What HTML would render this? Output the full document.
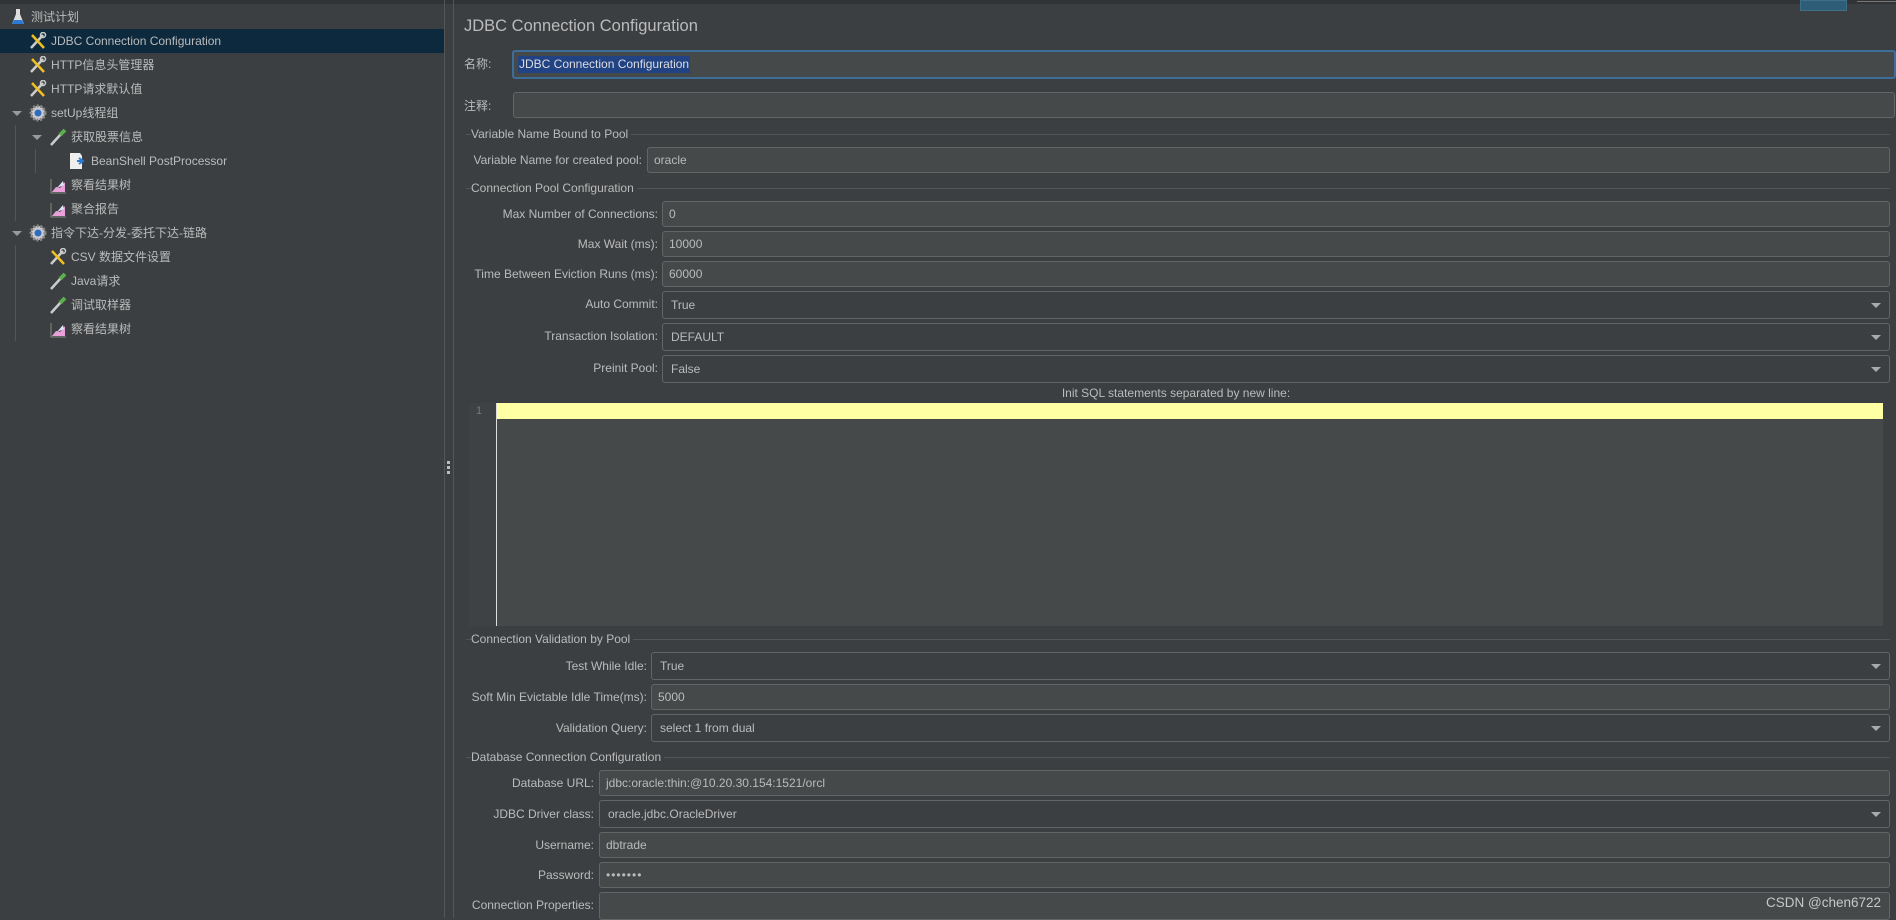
<!DOCTYPE html>
<html><head><meta charset="utf-8">
<style>
*{box-sizing:border-box;margin:0;padding:0}
body{width:1896px;height:918px;background:#3c3f41;font-family:"Liberation Sans","Noto Sans CJK SC",sans-serif;color:#bbbbbb;font-size:12px;position:relative;overflow:hidden}
.a{position:absolute;white-space:nowrap}
.row{position:absolute;left:0;width:444px;height:24px;line-height:24px;white-space:nowrap;font-size:12px}
.row svg{position:absolute;top:3px}
.row span{position:absolute}
.fld{position:absolute;background:#45494a;border:1px solid #646464;border-radius:3px;height:26px;line-height:24px;padding-left:6px;color:#bbbbbb;font-size:12px;white-space:nowrap}
.cmb{position:absolute;background:#3c3f41;border:1px solid #646464;border-radius:3px;height:28px;line-height:26px;padding-left:8px;font-size:12px;white-space:nowrap}
.cmb:after{content:"";position:absolute;right:8px;top:11px;border-left:5px solid transparent;border-right:5px solid transparent;border-top:5px solid #aaa}
.lbl{position:absolute;text-align:right;font-size:12px;line-height:26px;white-space:nowrap}
.sec{position:absolute;left:466px;right:6px;height:1px;background:#555}
.sec span{position:absolute;left:5px;top:-8px;background:#3c3f41;padding:0 3px 0 0;line-height:16px;font-size:12px;white-space:nowrap}
</style></head><body>
<div class="a" style="left:0;top:0;width:1896px;height:4px;background:#313335"></div>
<div class="a" style="left:444px;top:0;width:1px;height:918px;background:#555"></div>
<div class="a" style="left:453px;top:0;width:1px;height:918px;background:#555"></div>
<div class="a" style="left:447px;top:461px;width:3px;height:3px;background:#bbb"></div>
<div class="a" style="left:447px;top:466px;width:3px;height:3px;background:#bbb"></div>
<div class="a" style="left:447px;top:471px;width:3px;height:3px;background:#bbb"></div>
<div class="a" style="left:1800px;top:0;width:47px;height:11px;background:#2e5d78;border:1px solid #3f6e88"></div>
<div class="a" style="left:1857px;top:0;width:39px;height:2px;border-bottom:1px solid #777"></div>

<svg width="0" height="0" style="position:absolute">
<defs>
<g id="wr"><path d="M2 16 L14 3" stroke="#ccc" stroke-width="2.5"/><path d="M3 3 L15 16" stroke="#f0c020" stroke-width="2.5"/><circle cx="14" cy="3" r="2.5" fill="none" stroke="#ccc" stroke-width="1.5"/></g>
<g id="gr"><circle cx="9" cy="9" r="7" fill="#ccc" stroke="#888" stroke-dasharray="2 1.5" stroke-width="3"/><circle cx="9" cy="9" r="3.5" fill="#2d6cc0"/></g>
<g id="pp"><path d="M2 17 L12 6" stroke="#ccc" stroke-width="2.5"/><path d="M11 7 L16 2" stroke="#5cae4a" stroke-width="4"/></g>
<g id="ch"><path d="M2 3 V17 H17" stroke="#888" fill="none"/><path d="M3 16 L7 11 L11 12 L16 6 V16Z" fill="#e9a0d8"/><path d="M8 12 L14 5 L15 9Z" fill="#d8e6f6"/></g>
</defs></svg>

<div class="row" style="top:5px"><svg class="a" style="left:10px" width="16" height="18"><path d="M6 1h4v5l4 10H2l4-10z" fill="#ddd"/><path d="M4 12h8l2 4H2z" fill="#2b7bd6"/></svg><span style="left:31px">测试计划</span></div>
<div class="row" style="top:29px;background:#0d293e"><svg class="a" style="left:29px" width="18" height="18"><use href="#wr"/></svg><span style="left:51px">JDBC Connection Configuration</span></div>
<div class="row" style="top:53px"><svg class="a" style="left:29px" width="18" height="18"><use href="#wr"/></svg><span style="left:51px">HTTP信息头管理器</span></div>
<div class="row" style="top:77px"><svg class="a" style="left:29px" width="18" height="18"><use href="#wr"/></svg><span style="left:51px">HTTP请求默认值</span></div>
<div class="row" style="top:101px"><div class="a" style="left:12px;top:10px;border-left:5px solid transparent;border-right:5px solid transparent;border-top:5px solid #999"></div><svg class="a" style="left:29px" width="18" height="18"><use href="#gr"/></svg><span style="left:51px">setUp线程组</span></div>
<div class="row" style="top:125px"><div class="a" style="left:32px;top:10px;border-left:5px solid transparent;border-right:5px solid transparent;border-top:5px solid #999"></div><svg class="a" style="left:49px" width="18" height="18"><use href="#pp"/></svg><span style="left:71px">获取股票信息</span></div>
<div class="row" style="top:149px"><svg class="a" style="left:68px" width="20" height="18"><path d="M2 1h10l2 3v13H2z" fill="#eee"/><path d="M9 9h5M11 6l4 3-4 3" stroke="#2b7bd6" stroke-width="2" fill="none"/></svg><span style="left:91px">BeanShell PostProcessor</span></div>
<div class="row" style="top:173px"><svg class="a" style="left:49px" width="18" height="18"><use href="#ch"/></svg><span style="left:71px">察看结果树</span></div>
<div class="row" style="top:197px"><svg class="a" style="left:49px" width="18" height="18"><use href="#ch"/></svg><span style="left:71px">聚合报告</span></div>
<div class="row" style="top:221px"><div class="a" style="left:12px;top:10px;border-left:5px solid transparent;border-right:5px solid transparent;border-top:5px solid #999"></div><svg class="a" style="left:29px" width="18" height="18"><use href="#gr"/></svg><span style="left:51px">指令下达-分发-委托下达-链路</span></div>
<div class="row" style="top:245px"><svg class="a" style="left:49px" width="18" height="18"><use href="#wr"/></svg><span style="left:71px">CSV 数据文件设置</span></div>
<div class="row" style="top:269px"><svg class="a" style="left:49px" width="18" height="18"><use href="#pp"/></svg><span style="left:71px">Java请求</span></div>
<div class="row" style="top:293px"><svg class="a" style="left:49px" width="18" height="18"><use href="#pp"/></svg><span style="left:71px">调试取样器</span></div>
<div class="row" style="top:317px"><svg class="a" style="left:49px" width="18" height="18"><use href="#ch"/></svg><span style="left:71px">察看结果树</span></div>
<div class="a" style="left:15px;top:125px;width:1px;height:96px;background:#555"></div>
<div class="a" style="left:35px;top:149px;width:1px;height:24px;background:#555"></div>
<div class="a" style="left:15px;top:245px;width:1px;height:96px;background:#555"></div>

<div class="a" style="left:464px;top:15px;font-size:16.5px;line-height:22px">JDBC Connection Configuration</div>
<div class="a" style="left:464px;top:55px;line-height:18px">名称:</div>
<div class="a" style="left:512px;top:50px;width:1384px;height:29px;border:2px solid #3d6d99;border-radius:3px;background:#45494a"><span class="a" style="left:4px;top:4px;background:#214283;color:#ddd;line-height:17px;padding:0 1px;font-size:12px">JDBC Connection Configuration</span></div>
<div class="a" style="left:464px;top:97px;line-height:18px">注释:</div>
<div class="fld" style="left:513px;top:92px;width:1382px;height:26px"></div>

<div class="sec" style="top:134px"><span>Variable Name Bound to Pool</span></div>
<div class="lbl" style="left:440px;width:202px;top:147px">Variable Name for created pool:</div>
<div class="fld" style="left:647px;top:147px;width:1243px">oracle</div>

<div class="sec" style="top:188px"><span>Connection Pool Configuration</span></div>
<div class="lbl" style="left:440px;width:218px;top:201px">Max Number of Connections:</div>
<div class="fld" style="left:662px;top:201px;width:1228px">0</div>
<div class="lbl" style="left:440px;width:218px;top:231px">Max Wait (ms):</div>
<div class="fld" style="left:662px;top:231px;width:1228px">10000</div>
<div class="lbl" style="left:440px;width:218px;top:261px">Time Between Eviction Runs (ms):</div>
<div class="fld" style="left:662px;top:261px;width:1228px">60000</div>
<div class="lbl" style="left:440px;width:218px;top:291px">Auto Commit:</div>
<div class="cmb" style="left:662px;top:291px;width:1228px">True</div>
<div class="lbl" style="left:440px;width:218px;top:323px">Transaction Isolation:</div>
<div class="cmb" style="left:662px;top:323px;width:1228px">DEFAULT</div>
<div class="lbl" style="left:440px;width:218px;top:355px">Preinit Pool:</div>
<div class="cmb" style="left:662px;top:355px;width:1228px">False</div>

<div class="a" style="left:469px;top:385px;width:1414px;text-align:center;line-height:16px">Init SQL statements separated by new line:</div>
<div class="a" style="left:469px;top:403px;width:1414px;height:223px;background:#45494a"></div>
<div class="a" style="left:469px;top:403px;width:27px;height:223px;background:#3f4244"></div>
<div class="a" style="left:476px;top:403px;font-size:11px;color:#777;line-height:16px">1</div>
<div class="a" style="left:496px;top:403px;width:1387px;height:16px;background:#ffffa3"></div>
<div class="a" style="left:496px;top:403px;width:1px;height:223px;background:#ddd"></div>

<div class="sec" style="top:639px"><span>Connection Validation by Pool</span></div>
<div class="lbl" style="left:440px;width:207px;top:653px">Test While Idle:</div>
<div class="cmb" style="left:651px;top:652px;width:1239px">True</div>
<div class="lbl" style="left:440px;width:207px;top:684px">Soft Min Evictable Idle Time(ms):</div>
<div class="fld" style="left:651px;top:684px;width:1239px">5000</div>
<div class="lbl" style="left:440px;width:207px;top:715px">Validation Query:</div>
<div class="cmb" style="left:651px;top:714px;width:1239px">select 1 from dual</div>

<div class="sec" style="top:757px"><span>Database Connection Configuration</span></div>
<div class="lbl" style="left:440px;width:154px;top:770px">Database URL:</div>
<div class="fld" style="left:599px;top:770px;width:1291px">jdbc:oracle:thin:@10.20.30.154:1521/orcl</div>
<div class="lbl" style="left:440px;width:154px;top:801px">JDBC Driver class:</div>
<div class="cmb" style="left:599px;top:800px;width:1291px">oracle.jdbc.OracleDriver</div>
<div class="lbl" style="left:440px;width:154px;top:832px">Username:</div>
<div class="fld" style="left:599px;top:832px;width:1291px">dbtrade</div>
<div class="lbl" style="left:440px;width:154px;top:862px">Password:</div>
<div class="fld" style="left:599px;top:862px;width:1291px;letter-spacing:1px">•••••••</div>
<div class="lbl" style="left:440px;width:154px;top:892px">Connection Properties:</div>
<div class="fld" style="left:599px;top:892px;width:1291px;height:28px"></div>
<div class="a" style="left:1766px;top:894px;font-size:13.5px;line-height:18px;color:#c8c8c8">CSDN @chen6722</div>
</body></html>
